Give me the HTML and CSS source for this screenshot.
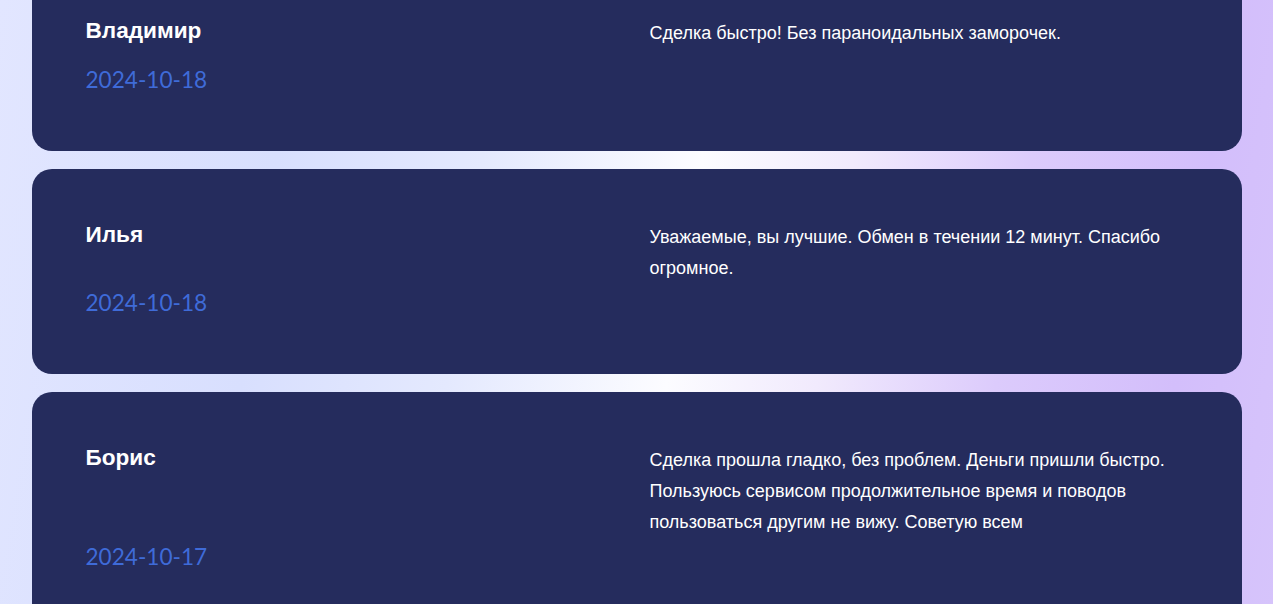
FILE: index.html
```html
<!DOCTYPE html>
<html lang="ru">
<head>
<meta charset="utf-8">
<title>Отзывы</title>
<link rel="stylesheet" href="styles.css">
</head>
<body>
<main class="reviews">
  <article class="review">
    <div class="review-meta">
      <h3 class="review-name">Владимир</h3>
      <time class="review-date">2024-10-18</time>
    </div>
    <p class="review-text">Сделка быстро! Без параноидальных заморочек.</p>
  </article>
  <article class="review">
    <div class="review-meta">
      <h3 class="review-name">Илья</h3>
      <time class="review-date">2024-10-18</time>
    </div>
    <p class="review-text">Уважаемые, вы лучшие. Обмен в течении 12 минут. Спасибо огромное.</p>
  </article>
  <article class="review">
    <div class="review-meta">
      <h3 class="review-name">Борис</h3>
      <time class="review-date">2024-10-17</time>
    </div>
    <p class="review-text">Сделка прошла гладко, без проблем. Деньги пришли быстро. Пользуюсь сервисом продолжительное время и поводов пользоваться другим не вижу. Советую всем</p>
  </article>
</main>
</body>
</html>
```

FILE: styles.css
```css
html, body {
  margin: 0;
  padding: 0;
}

body {
  min-height: 604px;
  overflow: hidden;
  font-family: "Liberation Sans", Arial, sans-serif;
  background: linear-gradient(99deg, #e2e6ff 0%, #d8dffe 22%, #e4e9fe 37%, #fcfcff 53%, #f1eafd 64%, #dccbfc 77%, #d3befb 90%, #d6c4fb 100%);
}

.reviews {
  max-width: 1210px;
  margin: -35px auto 0;
  display: flex;
  flex-direction: column;
  gap: 18px;
}

.review {
  background: #252c5d;
  border-radius: 20px;
  padding: 53px 54px 59px;
  display: grid;
  grid-template-columns: 1fr 1fr;
  column-gap: 26px;
}

.review-meta {
  display: flex;
  flex-direction: column;
  justify-content: space-between;
}

.review-name {
  margin: 0 0 23px;
  font-size: 22.6px;
  line-height: 26.4px;
  font-weight: 700;
  color: #ffffff;
}

.review-date {
  display: block;
  margin-bottom: -2px;
  font-family: Lato, "Liberation Sans", sans-serif;
  font-size: 22.6px;
  line-height: 26.4px;
  color: #3f6bd8;
}

.review-text {
  margin: 0;
  padding-bottom: 31px;
  font-size: 18px;
  line-height: 31px;
  color: #ffffff;
}
```
